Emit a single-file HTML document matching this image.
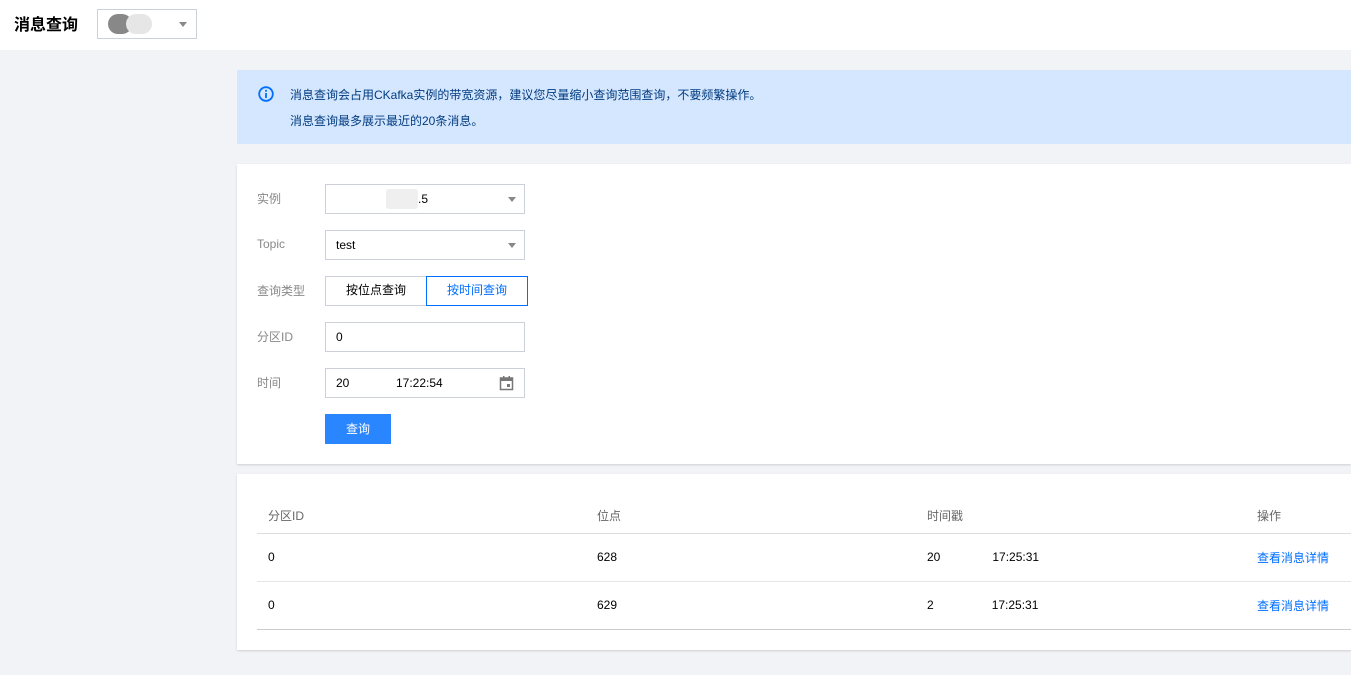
<!DOCTYPE html>
<html><head><meta charset="utf-8"><style>
*{box-sizing:border-box;margin:0;padding:0}
body{width:1351px;height:675px;background:#f2f3f7;font-family:"Liberation Sans","Noto Sans CJK SC",sans-serif;font-size:12px;color:#000;position:relative;overflow:hidden}
.top{position:absolute;left:0;top:0;width:1351px;height:50px;background:#fff}
.title{position:absolute;left:14px;top:11px;font-size:16px;font-weight:bold;color:#000}
.tsel{position:absolute;left:97px;top:9px;width:100px;height:30px;border:1px solid #ccd0d8;background:#fff}
.arrow{position:absolute;width:0;height:0;border-left:4px solid transparent;border-right:4px solid transparent;border-top:5px solid #888}
.alert{position:absolute;left:237px;top:70px;width:1114px;height:74px;background:#d5e7fe;color:#003b80}
.alert p{position:absolute;left:53px;font-size:12px}
.card{position:absolute;left:237px;background:#fff;box-shadow:0 1px 2px rgba(0,0,0,.15)}
.lbl{position:absolute;left:20px;color:#888;font-size:12px}
.inp{position:absolute;left:88px;width:200px;height:30px;border:1px solid #ccd0d8;background:#fff;line-height:28px;padding-left:10px;font-size:12px}
.btn{position:absolute;height:30px;line-height:28px;text-align:center;font-size:12px;border:1px solid #ccd0d8;background:#fff}
.th{position:absolute;top:33px;color:#444;font-size:12px}
.row{position:absolute;left:20px;width:1094px;border-bottom:1px solid #e5e5e5}
.cell{position:absolute;font-size:12px}
.link{color:#006eff}
</style></head><body>
<div class="top">
 <div class="title">消息查询</div>
 <div class="tsel">
  <div style="position:absolute;left:10px;top:4px;width:24px;height:20px;border-radius:10px;background:#888"></div>
  <div style="position:absolute;left:28px;top:4px;width:26px;height:20px;border-radius:10px;background:#e6e6e6"></div>
  <div class="arrow" style="left:81px;top:12px"></div>
 </div>
</div>
<div class="alert">
 <svg style="position:absolute;left:21px;top:16px" width="16" height="16" viewBox="0 0 16 16"><circle cx="8" cy="8" r="6.8" fill="none" stroke="#006eff" stroke-width="1.8"/><rect x="7.1" y="7" width="1.8" height="5" fill="#006eff"/><rect x="7.1" y="3.8" width="1.8" height="1.9" fill="#006eff"/></svg>
 <p style="top:16px">消息查询会占用CKafka实例的带宽资源，建议您尽量缩小查询范围查询，不要频繁操作。</p>
 <p style="top:42px">消息查询最多展示最近的20条消息。</p>
</div>
<div class="card" style="top:164px;width:1114px;height:300px">
 <div class="lbl" style="top:26px">实例</div>
 <div class="inp" style="top:20px"><span style="position:absolute;left:60px;top:4px;width:32px;height:20px;background:#efefef;border-radius:3px"></span><span style="position:absolute;left:92px;top:0">.5</span><div class="arrow" style="left:182px;top:12px"></div></div>
 <div class="lbl" style="top:73px">Topic</div>
 <div class="inp" style="top:66px">test<div class="arrow" style="left:182px;top:12px"></div></div>
 <div class="lbl" style="top:118px">查询类型</div>
 <div class="btn" style="left:88px;top:112px;width:102px;line-height:27px">按位点查询</div>
 <div class="btn" style="left:189px;top:112px;width:102px;border-color:#006eff;color:#006eff;line-height:27px">按时间查询</div>
 <div class="lbl" style="top:164px">分区ID</div>
 <div class="inp" style="top:158px">0</div>
 <div class="lbl" style="top:210px">时间</div>
 <div class="inp" style="top:204px">20<span style="position:absolute;left:70px">17:22:54</span>
  <svg style="position:absolute;left:173px;top:6px" width="15" height="16" viewBox="0 0 15 16"><rect x="1.5" y="3" width="12" height="11.5" fill="none" stroke="#777" stroke-width="1.5"/><rect x="1.5" y="3" width="12" height="3" fill="#777"/><rect x="4" y="1" width="1.5" height="3" fill="#777"/><rect x="9.5" y="1" width="1.5" height="3" fill="#777"/><rect x="8" y="9" width="3" height="3" fill="#777"/></svg></div>
 <div class="btn" style="left:88px;top:250px;width:66px;background:#2a86ff;border-color:#2a86ff;color:#fff;line-height:29px">查询</div>
</div>
<div class="card" style="top:474px;width:1114px;height:176px">
 <div class="th" style="left:31px;color:#666">分区ID</div>
 <div class="th" style="left:360px;color:#666">位点</div>
 <div class="th" style="left:690px;color:#666">时间戳</div>
 <div class="th" style="left:1020px;color:#666">操作</div>
 <div class="row" style="top:59px;height:1px;border-bottom:1px solid #ddd"></div>
 <div class="row" style="top:60px;height:48px">
  <div class="cell" style="left:11px;top:16px">0</div>
  <div class="cell" style="left:340px;top:16px">628</div>
  <div class="cell" style="left:670px;top:16px">20<span style="display:inline-block;width:52px"></span>17:25:31</div>
  <div class="cell link" style="left:1000px;top:15px">查看消息详情</div>
 </div>
 <div class="row" style="top:108px;height:48px;border-bottom:1px solid #ccc">
  <div class="cell" style="left:11px;top:16px">0</div>
  <div class="cell" style="left:340px;top:16px">629</div>
  <div class="cell" style="left:670px;top:16px">2<span style="display:inline-block;width:58px"></span>17:25:31</div>
  <div class="cell link" style="left:1000px;top:15px">查看消息详情</div>
 </div>
</div>
</body></html>
